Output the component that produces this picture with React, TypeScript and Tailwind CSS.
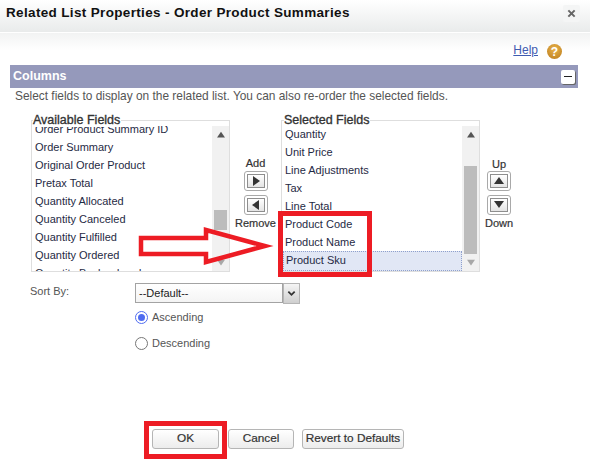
const availableFields = [
  "Order Product Summary ID",
  "Order Summary",
  "Original Order Product",
  "Pretax Total",
  "Quantity Allocated",
  "Quantity Canceled",
  "Quantity Fulfilled",
  "Quantity Ordered",
  "Quantity Backordered",
];

const selectedFields = ["Quantity", "Unit Price", "Line Adjustments", "Tax", "Line Total", "Product Code", "Product Name"];

// direction is the way the triangle points
function Triangle({ dir, className }: { dir: "up" | "down" | "left" | "right"; className: string }) {
  const points = {
    up: "5,1 10,8 0,8",
    down: "0,1 10,1 5,8",
    left: "8,0 8,10 1,5",
    right: "2,0 2,10 9,5",
  }[dir];
  return (
    <svg viewBox="0 0 10 10" className={className}>
      <polygon points={points} fill="currentColor" />
    </svg>
  );
}

function Scrollbar({ thumbTop, thumbHeight }: { thumbTop: string; thumbHeight: string }) {
  return (
    <div className="flex h-full w-[17px] shrink-0 flex-col items-center bg-[#f1f1f1]">
      <div className="flex h-[17px] shrink-0 items-center justify-center text-[#555]">
        <Triangle dir="up" className="h-[8px] w-[8px]" />
      </div>
      <div className="min-h-0 flex-1 self-stretch pl-[2px] pr-[2px]">
        <div className={`${thumbTop} ${thumbHeight} bg-[#bcbcbc]`} />
      </div>
      <div className="flex h-[16px] shrink-0 items-center justify-center text-[#a8a8a8]">
        <Triangle dir="down" className="h-[8px] w-[8px]" />
      </div>
    </div>
  );
}

function MoveButton({ dir }: { dir: "up" | "down" | "left" | "right" }) {
  return (
    <div className="flex h-[20px] w-[24px] items-center justify-center rounded-[3px] border border-[#a9a9a9] bg-white p-[2px]">
      <div className="flex h-full w-full items-center justify-center border border-[#8e8e8e] bg-linear-to-b from-white to-[#e4e4e4] text-[#333]">
        <Triangle dir={dir} className="h-[10px] w-[10px]" />
      </div>
    </div>
  );
}

function PageButton({ label, className }: { label: string; className: string }) {
  return (
    <button className={`h-[20px] whitespace-nowrap rounded-[3px] border border-[#b5b5b5] bg-linear-to-b from-white to-[#ececec] text-[11.8px] leading-none text-[#333] [-webkit-text-stroke:0.2px_#333] ${className}`}>
      {label}
    </button>
  );
}

export default function App() {
  return (
    <div className="relative h-[460px] w-[590px] overflow-hidden bg-white font-['Liberation_Sans',Arial,sans-serif]">
      {/* Title bar */}
      <div className="flex h-[33px] items-center justify-between border-b border-white bg-linear-to-b from-white to-[#e9ebeb] pl-[6px] pr-[10px]">
        <div className="pb-[6px] text-[13.5px] font-bold tracking-[0.34px] text-[#111]">
          Related List Properties - Order Product Summaries
        </div>
        <div className="mb-[5px] flex h-[17px] w-[17px] items-center justify-center rounded-[2px] bg-[#f4f5f5] text-[#666]">
          <svg viewBox="0 0 10 10" className="h-[9px] w-[9px]">
            <path d="M1.5 1.5 L8.5 8.5 M8.5 1.5 L1.5 8.5" stroke="currentColor" strokeWidth="2.2" />
          </svg>
        </div>
      </div>

      {/* Help */}
      <div className="flex h-[32px] items-start justify-end bg-[linear-gradient(#f2f3f3,#fff_55%)] pr-[28px] pt-[11px]">
        <a className="mt-[-1px] text-[12px] leading-[14px] text-[#3f5bb0] underline">Help</a>
        <div className="ml-[9px] flex h-[15px] w-[15px] items-center justify-center rounded-full bg-[radial-gradient(circle_at_50%_35%,#e9b44c,#b9791a)] text-[12px] font-bold leading-none text-white">
          ?
        </div>
      </div>

      {/* Columns section */}
      <div className="ml-[10px] flex h-[23px] w-[568px] items-center justify-between bg-[#9599bb] pl-[3px] pr-[3px]">
        <span className="text-[12.5px] font-bold text-white">Columns</span>
        <div className="flex h-[14px] w-[14px] items-center justify-center rounded-[2px] bg-white shadow-[1px_1px_0_#666]">
          <div className="h-[1.5px] w-[8px] bg-[#222]" />
        </div>
      </div>
      <div className="ml-[15px] mt-[1px] text-[11.9px] leading-[15px] text-[#555]">
        Select fields to display on the related list. You can also re-order the selected fields.
      </div>

      {/* Duelling lists */}
      <div className="ml-[31px] mt-[16px] flex h-[152px] items-start">
        <div className="relative h-[152px] w-[199px] border border-[#dedede] pt-[5px]">
          <span className="absolute left-[1px] top-[-8px] bg-white pr-[1px] text-[12.5px] leading-[14px] text-[#333] [-webkit-text-stroke:0.35px_#333]">
            Available Fields
          </span>
          <div className="flex h-full">
            <div className="min-w-0 flex-1 overflow-hidden">
              <div className="mt-[-6px]">
                {availableFields.map((f) => (
                  <div key={f} className="h-[18px] pl-[3px] text-[11px] leading-[18px] text-[#1f2a44]">{f}</div>
                ))}
              </div>
            </div>
            <Scrollbar thumbTop="mt-[67px]" thumbHeight="h-[20px]" />
          </div>
        </div>

        <div className="flex w-[51px] shrink-0 flex-col items-center pt-[37px]">
          <div className="h-[14px] text-[11px] leading-[13px] text-[#333] [-webkit-text-stroke:0.2px_#333]">Add</div>
          <MoveButton dir="right" />
          <div className="mt-[4px]"><MoveButton dir="left" /></div>
          <div className="mt-[2px] whitespace-nowrap text-[11px] leading-[13px] text-[#333] [-webkit-text-stroke:0.2px_#333]">Remove</div>
        </div>

        <div className="relative h-[152px] w-[199px] border border-[#dedede] pt-[5px]">
          <span className="absolute left-[2px] top-[-8px] bg-white pr-[1px] text-[12.5px] leading-[14px] text-[#333] [-webkit-text-stroke:0.35px_#333]">
            Selected Fields
          </span>
          <div className="flex h-full">
            <div className="min-w-0 flex-1 overflow-hidden">
              <div className="mt-[-1px]">
                {selectedFields.map((f) => (
                  <div key={f} className="h-[18px] pl-[3px] text-[11px] leading-[18px] text-[#1f2a44]">{f}</div>
                ))}
              </div>
              <div className="ml-[1px] h-[20px] border border-dotted border-[#8fa0cc] bg-[#e1e7f5] pl-[2px] text-[11px] leading-[17px] text-[#1f2a44]">
                Product Sku
              </div>
            </div>
            <Scrollbar thumbTop="mt-[23px]" thumbHeight="h-[88px]" />
          </div>
        </div>

        <div className="ml-[7px] flex w-[24px] shrink-0 flex-col items-center pt-[38px]">
          <div className="h-[13px] text-[11px] leading-[13px] text-[#333] [-webkit-text-stroke:0.2px_#333]">Up</div>
          <MoveButton dir="up" />
          <div className="mt-[4px]"><MoveButton dir="down" /></div>
          <div className="mt-[2px] text-[11px] leading-[13px] text-[#333] [-webkit-text-stroke:0.2px_#333]">Down</div>
        </div>
      </div>

      {/* Sort */}
      <div className="ml-[30px] mt-[11px] flex items-start">
        <div className="w-[105px] pt-[1px] text-[11px] leading-[14px] text-[#555]">Sort By:</div>
        <div className="flex flex-col">
          <div className="flex items-start">
            <div className="h-[20px] w-[148px] border border-[#a3a3a3] bg-linear-to-b from-white to-[#f4f4f4] pl-[3px] text-[11px] leading-[18px] text-[#222]">
              --Default--
            </div>
            <div className="flex h-[21px] w-[17px] items-center justify-center border border-[#b5b5b5] bg-linear-to-b from-[#f5f5f5] to-[#cfcfcf] text-[#333]">
              <svg viewBox="0 0 10 10" className="h-[9px] w-[9px]">
                <path d="M1.5 3 L5 6.5 L8.5 3" fill="none" stroke="currentColor" strokeWidth="2" />
              </svg>
            </div>
          </div>
          <label className="mt-[6px] flex h-[14px] items-center text-[11px] text-[#555]">
            <span className="mr-[4px] flex h-[13px] w-[13px] items-center justify-center rounded-full border border-[#4f6cf0] bg-white">
              <span className="h-[7px] w-[7px] rounded-full bg-[#4f6cf0]" />
            </span>
            <span className="pt-[1px]">Ascending</span>
          </label>
          <label className="mt-[12px] flex h-[14px] items-center text-[11px] text-[#555]">
            <span className="mr-[4px] h-[13px] w-[13px] rounded-full border border-[#777] bg-white" />
            <span className="pt-[1px]">Descending</span>
          </label>
        </div>
      </div>

      {/* Footer buttons */}
      <div className="ml-[152px] mt-[79px] flex items-start">
        <PageButton label="OK" className="w-[67px]" />
        <PageButton label="Cancel" className="ml-[9px] w-[66px]" />
        <PageButton label="Revert to Defaults" className="ml-[8px] w-[102px]" />
      </div>

      {/* Red annotations drawn on top of the screenshot */}
      <div className="absolute left-[278px] top-[211px] h-[66px] w-[94px] border-[5px] border-[#ed1c24]" />
      <div className="absolute left-[144px] top-[421px] h-[38px] w-[83px] border-[5px] border-[#ed1c24]" />
      <svg className="absolute left-[130px] top-[215px] h-[65px] w-[160px]" viewBox="0 0 160 65">
        <polygon points="11,23 76,23 76,15 135,31 76,47 76,39 11,39" fill="none" stroke="#ed1c24" strokeWidth="4.5" />
      </svg>
    </div>
  );
}
